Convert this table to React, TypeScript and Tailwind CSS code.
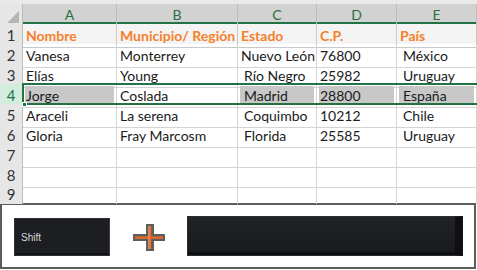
import React from "react";

type Row = { n: number; cells: string[] };

const cols = ["A", "B", "C", "D", "E"];

// a leading space marks the cells typed with an indent
const rows: Row[] = [
  { n: 2, cells: ["Vanesa", "Monterrey", "Nuevo León", "76800", " México"] },
  { n: 3, cells: ["Elías", "Young", " Río Negro", "25982", " Uruguay"] },
  { n: 4, cells: ["Jorge", "Coslada", " Madrid", "28800", " España"] },
  { n: 5, cells: ["Araceli", "La serena", " Coquimbo", "10212", " Chile"] },
  { n: 6, cells: ["Gloria", "Fray Marcosm", " Florida", "25585", " Uruguay"] },
  { n: 7, cells: ["", "", "", "", ""] },
  { n: 8, cells: ["", "", "", "", ""] },
];

const grid = "grid grid-cols-[23px_94px_121px_79px_80px_80px]";

const Cell: React.FC<{ text: string; gray?: boolean }> = ({ text, gray }) => {
  const pad = text.startsWith(" ");
  return (
    <div className="border-r border-b border-[#d4d4d4] flex overflow-hidden whitespace-nowrap">
      <div
        className={`flex-1 flex items-center ${gray ? "bg-[#c8c8c8] m-[2px] pl-[1px]" : "pl-[3px]"} ${
          pad ? (gray ? "pl-[4px]" : "pl-[6px]") : ""
        }`}
      >
        {text.trim()}
      </div>
    </div>
  );
};

const PlusIcon = () => (
  <svg width="33" height="27" viewBox="0 0 33 27">
    <path d="M13 0 H21 V10 H32 V17 H21 V27 H13 V17 H0 V10 H13 Z" fill="#5e5e5e" />
    <rect x="16" y="2" width="2.2" height="23" fill="#f26b21" />
    <rect x="2" y="12.5" width="28" height="2.2" fill="#f26b21" />
    <rect x="15.4" y="2" width="0.8" height="23" fill="#f7b48a" />
  </svg>
);

export default function App() {
  return (
    <div
      className="w-[477px] h-[270px] bg-white overflow-hidden text-[14px] text-[#1a1a1a]"
      style={{ fontFamily: "Lato, 'Noto Sans', sans-serif" }}
    >
      {/* column headers */}
      <div className="h-[4px] bg-[#e9e9e9]" />
      <div className={`${grid} h-[20px] bg-[#d2d2d2] border-b-2 border-[#217346]`}>
        <div className="bg-[#e6e6e6] border-r border-[#bdbdbd] relative">
          <svg className="absolute right-[3px] bottom-[2px]" width="12" height="12" viewBox="0 0 12 12">
            <path d="M12 0 V12 H0 Z" fill="#b5b5b5" />
          </svg>
        </div>
        {cols.map((c) => (
          <div key={c} className="border-r border-[#bdbdbd] flex items-center justify-center text-[#2a6e45] text-[14px]">
            {c}
          </div>
        ))}
      </div>

      {/* row 1 */}
      <div className={`${grid} h-[20px] bg-[#f4f4f4]`}>
        <div className="bg-[#e6e6e6] border-r border-b border-[#bdbdbd] flex items-center justify-center text-[#333] text-[15px]">1</div>
        {["Nombre", "Municipio/ Región", "Estado", "C.P.", "País"].map((t) => (
          <div
            key={t}
            className="border-r border-b border-[#c8c8c8] flex items-center pl-[3px] font-bold text-[#f4802a] whitespace-nowrap overflow-hidden"
          >
            {t}
          </div>
        ))}
      </div>

      {/* data rows */}
      <div className="relative">
        {rows.map((r) => {
          const sel = r.n === 4;
          return (
            <div key={r.n} className={`${grid} h-[20px]`}>
              <div
                className={`border-r border-b border-[#bdbdbd] flex items-center justify-center text-[15px] ${
                  sel ? "bg-[#d3eddd] text-[#217346]" : "bg-[#e6e6e6] text-[#333]"
                }`}
              >
                {r.n}
              </div>
              {r.cells.map((t, i) => (
                <Cell key={i} text={t} gray={sel && i !== 1} />
              ))}
            </div>
          );
        })}
        <div className={`${grid} h-[19px]`}>
          <div className="bg-[#e6e6e6] border-r border-[#bdbdbd] flex items-start justify-center text-[#333] text-[15px] leading-[20px]">
            9
          </div>
          {cols.map((c) => (
            <div key={c} className="border-r border-[#d4d4d4]" />
          ))}
        </div>
        {/* selection outline on row 4 */}
        <div className="absolute left-[22px] right-0 top-[39px] h-[22px] border-2 border-r-0 border-[#217346] pointer-events-none" />
        <div className="absolute left-[22px] top-[58px] w-[5px] h-[5px] bg-[#217346] border border-white" />
      </div>

      {/* keys box */}
      <div className="h-[66px] w-[476px] border-2 border-[#5c5c5c] bg-white flex items-center pl-[12px]">
        <div
          className="w-[96px] h-[38px] mt-[2px] bg-[#1c1e21] border border-[#2e3033] border-r-[#3b3d40] shadow-[inset_0_-2px_0_#121315] flex items-center pl-[6px] text-[10px] text-[#d8d8d8]"
          style={{ fontFamily: "'Liberation Sans', Arial, sans-serif" }}
        >
          Shift
        </div>
        <div className="ml-[23px] mt-[2px] flex">
          <PlusIcon />
        </div>
        <div className="ml-[21px] w-[276px] h-[40px] bg-gradient-to-b from-[#212327] to-[#181a1d] border border-[#2a2c2f] border-r-[8px] border-r-[#0e0f11] shadow-[inset_0_-3px_0_#0d0e10]" />
      </div>
    </div>
  );
}
